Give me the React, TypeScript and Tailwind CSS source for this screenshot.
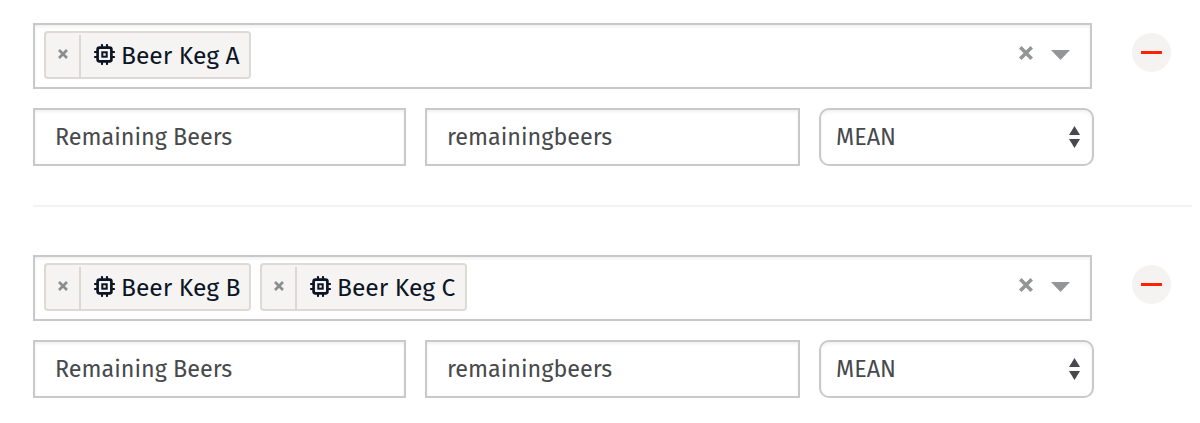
function KegTag({ name }: { name: string }) {
  return (
    <span className="flex h-12 w-[206.500px] shrink-0 overflow-hidden rounded border-2 border-[#dddad6] bg-[#f5f4f3] text-[#0b1526]">
      <button type="button" aria-label={`Remove ${name}`} className="mt-0.5 flex h-[42px] w-[35px] shrink-0 items-center justify-center border-r-2 border-[#dcd9d4] pb-1">
        <svg viewBox="0 0 10 10" className="h-[10px] w-[10px]" stroke="#8b8c8e" strokeWidth="2.6">
          <path d="M1 1l8 8M9 1L1 9" />
        </svg>
      </button>
      <svg viewBox="0 0 21 21" className="ml-[13px] mt-[10.5px] h-[21px] w-[21px] shrink-0" fill="none" stroke="currentColor">
        <rect x="3.6" y="3.6" width="13.8" height="13.8" rx="1.8" strokeWidth="2.7" />
        <rect x="8.300" y="8.300" width="4.400" height="4.400" strokeWidth="2" />
        <path strokeWidth="2.1" strokeLinecap="round" d="M8 1v2M13 1v2M8 18v2M13 18v2M1 8h2M1 13h2M18 8h2M18 13h2" />
      </svg>
      <span className="ml-[6px] whitespace-nowrap text-[24.6px] leading-[46px]">{name}</span>
    </span>
  );
}

const field =
  "flex h-[58px] items-center border-2 border-[#c9c9c9] bg-white text-[23.35px] leading-none text-[#47494c] shadow-[inset_0_2px_3px_rgba(0,0,0,0.06)]";

function MetricGroup({ kegs }: { kegs: string[] }) {
  return (
    <section>
      <div className="flex">
        <div className="flex h-[66px] w-[1059px] items-start gap-[9.5px] border-2 border-[#c9c9c9] pl-[9px] pt-[6px] shadow-[inset_0_2px_3px_rgba(0,0,0,0.06)]">
          {kegs.map((keg) => (
            <KegTag key={keg} name={keg} />
          ))}
          <div className="ml-auto mr-[20px] flex h-[43px] items-center gap-[18px]">
            <svg viewBox="0 0 14 14" className="h-[14px] w-[14px]" stroke="#939597" strokeWidth="3.6">
              <path d="M1.3 1.3l11.4 11.4M12.7 1.3L1.3 12.7" />
            </svg>
            <svg viewBox="0 0 19 10" className="mt-[4px] h-[10px] w-[19px]" fill="#939597">
              <path d="M0 0h19L9.5 10z" />
            </svg>
          </div>
        </div>
        <button type="button" aria-label="Remove group" className="ml-[40px] mt-[9.5px] flex h-[39px] w-[39px] items-center justify-center rounded-full bg-[#f4f3f2]">
          <span className="h-[3px] w-[21px] bg-[#ff2200]" />
        </button>
      </div>
      <div className="mt-[19px] flex">
        <div className={`${field} w-[373px] pl-[20px]`}>
          <span className="whitespace-nowrap pt-[2px]">Remaining Beers</span>
        </div>
        <div className={`${field} ml-[19px] w-[375px] pl-[20px]`}>
          <span className="whitespace-nowrap pt-[2px]">remainingbeers</span>
        </div>
        <div className={`${field} ml-[19px] w-[275px] justify-between rounded-[10px] pl-[15px] pr-[12px]`}>
          <span className="whitespace-nowrap pt-[2px]">MEAN</span>
          <svg viewBox="0 0 11 22" className="h-[22px] w-[11px]" fill="#47494c">
            <path d="M0 9L5.5 0 11 9zM0 13h11l-5.500 9z" />
          </svg>
        </div>
      </div>
    </section>
  );
}

export default function App() {
  return (
    <main className="h-[423px] overflow-hidden bg-white pl-[33px] pt-[23px] font-['Fira_Sans','Noto_Sans',sans-serif]">
      <MetricGroup kegs={["Beer Keg A"]} />
      <div className="mb-[48px] mr-[8px] mt-[39px] h-[2px] bg-[#f3f3f3]" />
      <MetricGroup kegs={["Beer Keg B", "Beer Keg C"]} />
    </main>
  );
}
